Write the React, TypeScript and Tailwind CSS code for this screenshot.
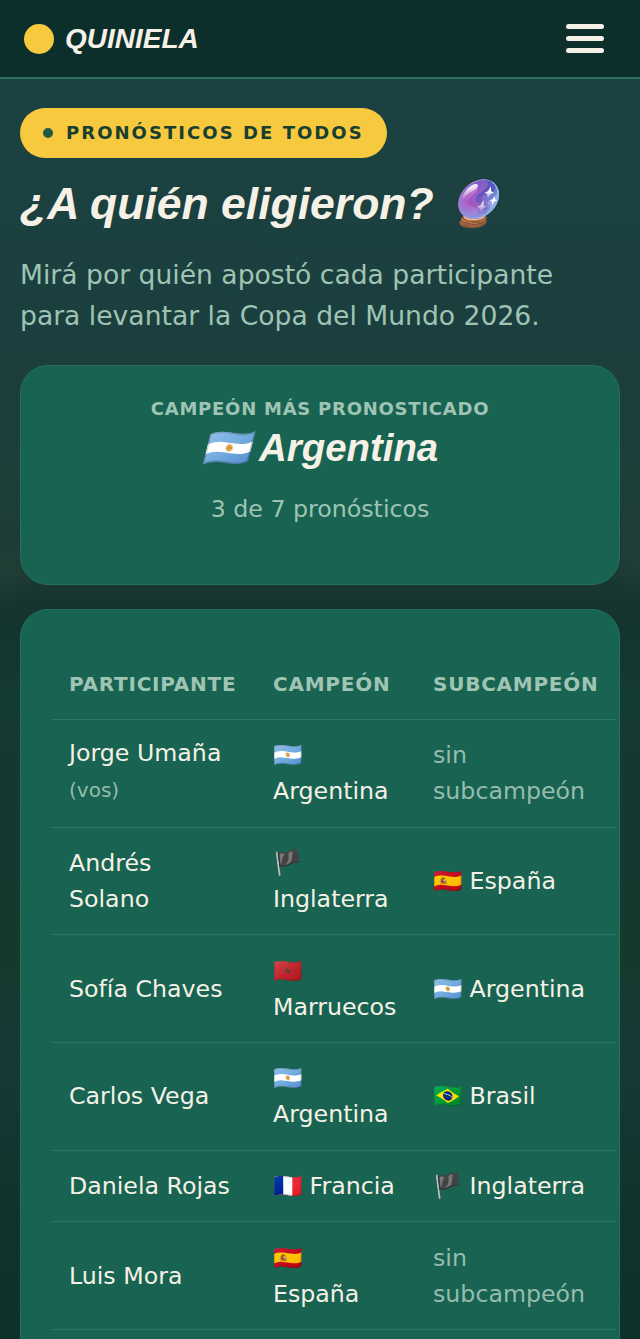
const flagAr = "🇦🇷";
const flagEs = "🇪🇸";
const flagEn = "🏴";
const flagMa = "🇲🇦";
const flagBr = "🇧🇷";
const flagFr = "🇫🇷";

type Pick = { flag: string; name: string } | null;

const rows: { name: string; you?: boolean; champ: Pick; sub: Pick }[] = [
  { name: "Jorge Umaña", you: true, champ: { flag: flagAr, name: "Argentina" }, sub: null },
  { name: "Andrés Solano", champ: { flag: flagEn, name: "Inglaterra" }, sub: { flag: flagEs, name: "España" } },
  { name: "Sofía Chaves", champ: { flag: flagMa, name: "Marruecos" }, sub: { flag: flagAr, name: "Argentina" } },
  { name: "Carlos Vega", champ: { flag: flagAr, name: "Argentina" }, sub: { flag: flagBr, name: "Brasil" } },
  { name: "Daniela Rojas", champ: { flag: flagFr, name: "Francia" }, sub: { flag: flagEn, name: "Inglaterra" } },
  { name: "Luis Mora", champ: { flag: flagEs, name: "España" }, sub: null },
];

function PickCell({ pick }: { pick: Pick }) {
  if (!pick) return <span className="text-[#95bcac]">sin subcampeón</span>;
  return (
    <span>
      {pick.flag} {pick.name}
    </span>
  );
}

export default function App() {
  return (
    <div className="relative h-[1339px] overflow-hidden font-['DejaVu_Sans',sans-serif] text-[#f5f1e6] bg-[radial-gradient(ellipse_50px_40px_at_0px_565px,#223f37,transparent),radial-gradient(ellipse_40px_50px_at_640px_550px,#223f37,transparent),linear-gradient(180deg,#1b4242_0%,#1b3f3e_25%,#1e3e38_38%,#17362f_44%,#14342d_46%,#133a31_52%,#153832_60%,#15392c_72%,#173a38_78%,#10332d_90%,#0f312b_100%)]">
      <nav className="flex h-[79px] items-center justify-between border-b-2 border-[#2c6f5e] bg-[#0d2f2b] pl-6 pr-9">
        <div className="flex items-center gap-[11px]">
          <span className="h-[30px] w-[30px] rounded-full bg-[#f6c93f]" />
          <span className="font-['Liberation_Sans',sans-serif] text-[28px] font-bold italic">QUINIELA</span>
        </div>
        <div className="flex w-[38px] flex-col gap-[7px]">
          <span className="h-[5px] rounded-full bg-[#f5f1e6]" />
          <span className="h-[5px] rounded-full bg-[#f5f1e6]" />
          <span className="h-[5px] rounded-full bg-[#f5f1e6]" />
        </div>
      </nav>

      <main className="flex flex-col px-5 pt-[29px]">
        <div className="flex h-[50px] w-[367px] items-center gap-[13px] rounded-full bg-[#f6c93f] pb-[2px] pl-[23px] text-[18px] font-bold tracking-[2.05px] text-[#173f2f]">
          <span className="mt-[2px] h-[10px] w-[10px] rounded-full bg-[#1f5a41]" />
          PRONÓSTICOS DE TODOS
        </div>
        <h1 className="mt-[16px] font-['Liberation_Sans',sans-serif] text-[44.5px] leading-[60px] font-bold italic">
          ¿A quién eligieron? 🔮
        </h1>
        <p className="mt-[20px] max-w-[560px] text-[26.6px] leading-[41px] text-[#9fc4b4]">
          Mirá por quién apostó cada participante para levantar la Copa del Mundo 2026.
        </p>

        <section className="mt-[29px] h-[220px] rounded-[28px] border border-[#24705d] bg-[#186351] pt-[32px] text-center">
          <div className="text-[18px] leading-[22px] font-bold tracking-[0.76px] text-[#9fc4b4]">CAMPEÓN MÁS PRONOSTICADO</div>
          <div className="mt-[3px] font-['Liberation_Sans',sans-serif] text-[38.4px] leading-[50px] font-bold italic">{flagAr} Argentina</div>
          <div className="mt-[18px] text-[23.7px] leading-[36px] text-[#9fc4b4]">3 de 7 pronósticos</div>
        </section>

        <section className="mt-[24px] h-[800px] overflow-hidden rounded-[28px] border border-[#24705d] bg-[#186351] pt-[59px] pl-[30px]">
          <table className="w-[565px] table-fixed border-collapse text-left text-[23.7px] leading-[36px]">
            <thead>
              <tr className="border-b border-[#2a7563]">
                <th className="w-[204px] pb-[20px] pl-[18px] text-[20px] leading-[30px] font-bold tracking-[0.75px] text-[#9fc4b4]">PARTICIPANTE</th>
                <th className="w-[160px] pb-[20px] pl-[18px] text-[20px] leading-[30px] font-bold tracking-[0.75px] text-[#9fc4b4]">CAMPEÓN</th>
                <th className="pb-[20px] pl-[18px] text-[20px] leading-[30px] font-bold tracking-[0.75px] whitespace-nowrap text-[#9fc4b4]">SUBCAMPEÓN</th>
              </tr>
            </thead>
            <tbody>
              {rows.map((row) => (
                <tr key={row.name} className="border-b border-[#2a7563]">
                  {row.you ? (
                    <td className="pt-[15px] pr-[18px] pb-[18px] pl-[18px]">
                      {row.name}
                      <div className="mt-[1px] text-[20px] text-[#95bcac]">(vos)</div>
                    </td>
                  ) : (
                    <td className="py-[17.35px] pr-[18px] pl-[18px]">{row.name}</td>
                  )}
                  <td className="py-[17.35px] pr-[19.5px] pl-[18px]"><PickCell pick={row.champ} /></td>
                  <td className="py-[17.35px] pr-[10px] pl-[18px]"><PickCell pick={row.sub} /></td>
                </tr>
              ))}
            </tbody>
          </table>
        </section>
      </main>
    </div>
  );
}
